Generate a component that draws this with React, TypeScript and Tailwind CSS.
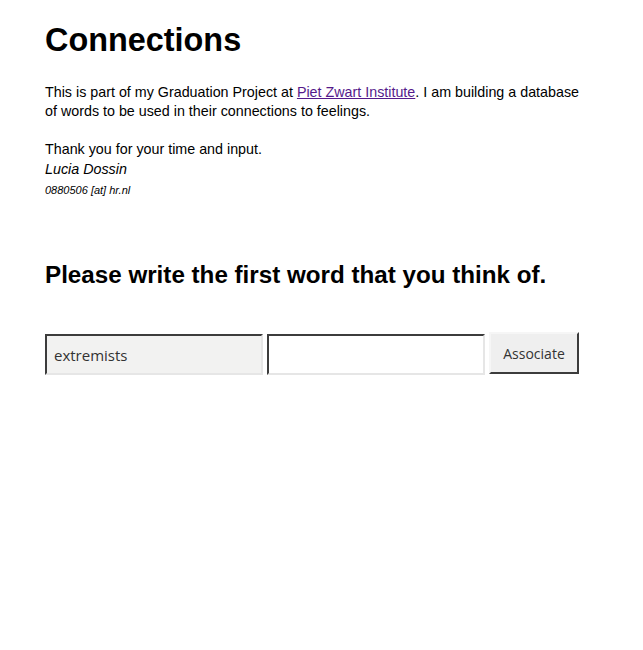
export default function App() {
  return (
    <div className="min-h-[650px] bg-white px-[45px] text-black" style={{ fontFamily: '"Liberation Sans", Arial, sans-serif' }}>
      <h1 className="pt-[20px] text-[32.4px] font-bold leading-[40px]">Connections</h1>
      <div className="mt-[23px] max-w-[545px] text-[14.3px] leading-[19px]">
        <p>
          This is part of my Graduation Project at{" "}
          <a href="#" className="text-[#551a8b] underline">Piet Zwart Institute</a>. I am building a database of words to be used in their connections to feelings.
        </p>
        <p className="mt-[19px]">Thank you for your time and input.</p>
        <p className="italic leading-[20px]">Lucia Dossin</p>
        <p className="mt-[4px] text-[11px] italic leading-[14px]">0880506 [at] hr.nl</p>
      </div>
      <h2 className="mt-[64px] text-[24.2px] font-bold leading-[28px]">Please write the first word that you think of.</h2>
      <div className="mt-[43px] flex items-start gap-[4px]" style={{ fontFamily: '"Open Sans", "Noto Sans", sans-serif' }}>
        <input
          readOnly
          value="extremists"
          className="mt-[2px] h-[41px] w-[218px] border-2 border-t-[#3c3c3c] border-l-[#3c3c3c] border-b-[#e6e6e6] border-r-[#e6e6e6] bg-[#f2f2f1] px-[7px] text-[15px] text-[#333] outline-none"
        />
        <input
          className="mt-[2px] h-[41px] w-[218px] border-2 border-t-[#3c3c3c] border-l-[#3c3c3c] border-b-[#e6e6e6] border-r-[#e6e6e6] bg-white px-[7px] text-[15px] outline-none"
        />
        <button className="h-[42px] w-[90px] border-2 border-t-[#f6f6f6] border-l-[#f6f6f6] border-b-[#3c3c3c] border-r-[#3c3c3c] bg-[#efefef] text-[14px] text-[#333]">
          Associate
        </button>
      </div>
    </div>
  );
}
